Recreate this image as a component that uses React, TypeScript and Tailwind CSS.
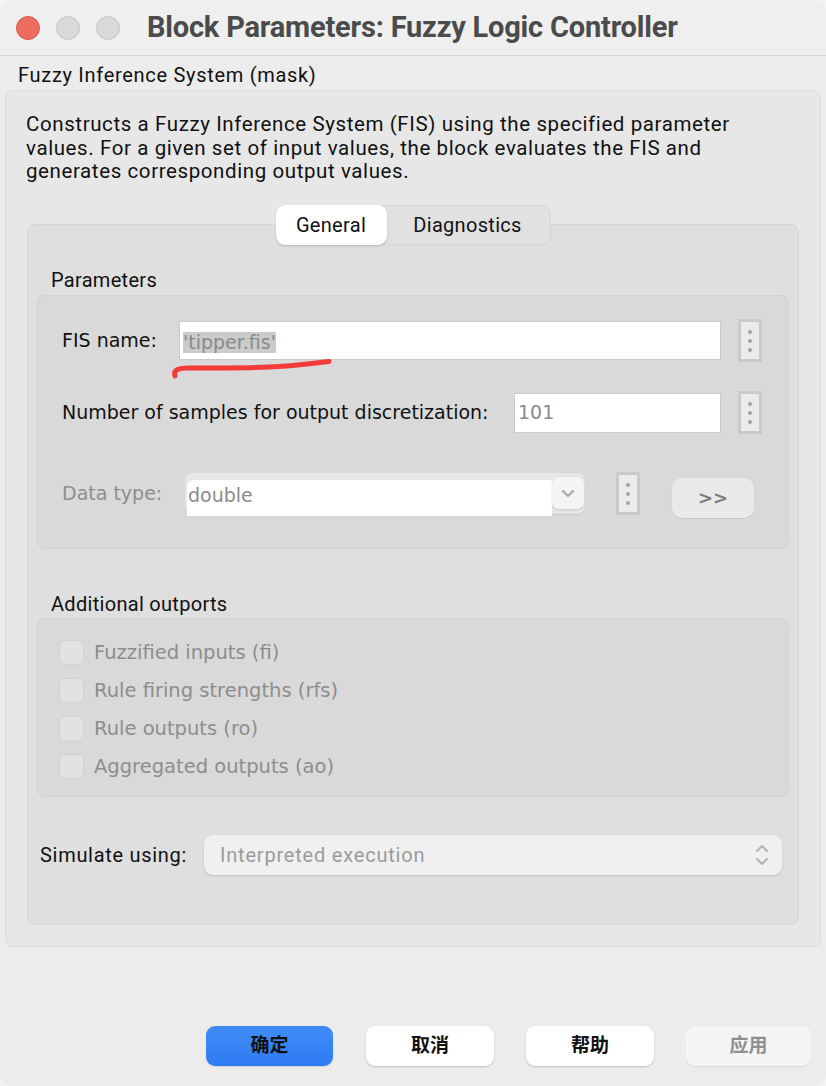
import React from "react";

const SF = "font-['Roboto','Inter',sans-serif]";
const LG = "font-['DejaVu_Sans','Verdana',sans-serif]";

function Dots() {
  return (
    <div className="w-[24px] h-[43px] border-[3px] border-[#c9c9c9] bg-[#ebebeb] flex flex-col items-center justify-center gap-[5px] shrink-0">
      <span className="w-[4px] h-[4px] rounded-full bg-[#a3a3a3]" />
      <span className="w-[4px] h-[4px] rounded-full bg-[#a3a3a3]" />
      <span className="w-[4px] h-[4px] rounded-full bg-[#a3a3a3]" />
    </div>
  );
}

function Check({ label }: { label: string }) {
  return (
    <div className="h-[38px] flex items-center">
      <span className="w-[25px] h-[25px] rounded-[6px] bg-[#e2e2e2] border border-[#d3d3d3] shrink-0" />
      <span className={`${LG} ml-[10px] text-[19.5px] text-[#8d8d8d]`}>{label}</span>
    </div>
  );
}

export default function App() {
  return (
    <div className="w-[826px] h-[1086px] bg-[#f4f4f4]">
      <div className="w-[826px] h-[1086px] bg-[#ececec] rounded-[12px] overflow-hidden flex flex-col relative">
        {/* Title bar */}
        <div className="h-[56px] shrink-0 flex items-center border-b border-[#d5d5d5] bg-[#efefef]">
          <div className="flex items-center gap-[16px] pl-[16px]">
            <span className="w-[24px] h-[24px] rounded-full bg-[#ee6b60] border border-[#d45a50]" />
            <span className="w-[24px] h-[24px] rounded-full bg-[#dadada] border border-[#c5c5c5]" />
            <span className="w-[24px] h-[24px] rounded-full bg-[#dadada] border border-[#c5c5c5]" />
          </div>
          <div className={`${SF} ml-[27px] text-[29px] font-bold text-[#4b4b4b] tracking-[-0.2px] whitespace-nowrap`}>
            Block Parameters: Fuzzy Logic Controller
          </div>
        </div>

        {/* Mask label */}
        <div className={`${SF} pl-[18px] pt-[7px] text-[20px] tracking-[0.7px] leading-[24px] text-[#111]`}>
          Fuzzy Inference System (mask)
        </div>

        {/* Outer panel */}
        <div className="mx-[5px] mt-[3px] bg-[#e7e7e7] border border-[#dcdcdc] rounded-[8px] pt-[22px] pb-[21px] px-[21px]">
          <p className={`${SF} text-[20.5px] tracking-[0.6px] leading-[23.5px] text-[#111] pr-[40px] -mx-[1px]`}>
            Constructs a Fuzzy Inference System (FIS) using the specified parameter values. For a given set of input values, the block evaluates the FIS and generates corresponding output values.
          </p>

          {/* Tabs */}
          <div className="mt-[21px] flex justify-center relative z-10">
            <div className={`${SF} flex h-[40px] bg-[#e1e1e1] border border-[#d4d4d4] rounded-[9px] text-[20px] tracking-[0.3px] text-[#111]`}>
              <div className="w-[111px] -m-[1px] h-[40px] bg-white rounded-[9px] shadow-[0_1px_2px_rgba(0,0,0,0.2)] flex items-center justify-center">
                General
              </div>
              <div className="w-[164px] flex items-center justify-center">Diagnostics</div>
            </div>
          </div>

          {/* Tab panel */}
          <div className="-mt-[21px] bg-[#dfdfdf] border border-[#d6d6d6] rounded-[8px] px-[9px] pt-[43px] pb-[49px]">
            <div className={`${SF} pl-[14px] text-[20px] tracking-[0.3px] leading-[24px] text-[#111]`}>Parameters</div>

            {/* Parameters group */}
            <div className="mt-[3px] bg-[#d9d9d9] border border-[#d2d2d2] rounded-[8px] pt-[20px] pb-[29px] pl-[24px]">
              {/* Row 1 */}
              <div className="h-[50px] flex items-center relative">
                <span className={`${LG} w-[117px] text-[19px] text-[#111]`}>FIS name:</span>
                <div className="w-[542px] h-[39px] bg-white border border-[#cacaca] flex items-center pl-[3px] pt-[3px]">
                  <span className={`${LG} text-[19px] text-[#8a8a8a] bg-[#cbcbcb] leading-[21px]`}>'tipper.fis'</span>
                </div>
                <div className="ml-[17px]">
                  <Dots />
                </div>
                <svg className="absolute left-[107px] top-[43px] pointer-events-none" width="170" height="24" viewBox="0 0 170 24">
                  <path
                    d="M6 17 C4 11 9 9 20 9 C50 9 80 9 100 8 C125 7 145 4 160 2.5"
                    fill="none"
                    stroke="#f53a3a"
                    strokeWidth="5"
                    strokeLinecap="round"
                  />
                </svg>
              </div>

              {/* Row 2 */}
              <div className="mt-[22px] h-[50px] flex items-center">
                <span className={`${LG} w-[452px] text-[19px] text-[#111] whitespace-nowrap`}>
                  Number of samples for output discretization:
                </span>
                <div className="w-[207px] h-[40px] bg-white border border-[#cacaca] flex items-center pl-[3px]">
                  <span className={`${LG} text-[19px] text-[#8a8a8a]`}>101</span>
                </div>
                <div className="ml-[17px]">
                  <Dots />
                </div>
              </div>

              {/* Row 3 */}
              <div className="mt-[31px] h-[50px] flex items-center">
                <span className={`${LG} w-[123px] text-[19px] text-[#8e8e8e]`}>Data type:</span>
                <div className="w-[400px] h-[41px] bg-[#e6e6e6] rounded-[8px] shadow-[0_1px_1px_rgba(0,0,0,0.08)] flex items-start">
                  <div className="w-[365px] h-[36px] mt-[7px] ml-[2px] bg-white rounded-tl-[6px] flex items-center pl-[1px] pb-[5px]">
                    <span className={`${LG} text-[19px] text-[#8a8a8a]`}>double</span>
                  </div>
                  <div className="w-[32px] h-[32px] mt-[4px] bg-[#f4f4f4] rounded-[7px] shadow-[0_1px_2px_rgba(0,0,0,0.15)] flex items-center justify-center">
                    <svg width="14" height="9" viewBox="0 0 14 9">
                      <path d="M2 2 L7 7 L12 2" fill="none" stroke="#a9a9a9" strokeWidth="2.2" strokeLinecap="round" strokeLinejoin="round" />
                    </svg>
                  </div>
                </div>
                <div className="ml-[31px]">
                  <Dots />
                </div>
                <div className={`${LG} ml-[32px] mt-[8px] w-[82px] h-[40px] bg-[#e9e9e9] rounded-[10px] shadow-[0_1px_1px_rgba(0,0,0,0.08)] flex items-center justify-center text-[18px] font-bold text-[#7a7a7a]`}>
                  &gt;&gt;
                </div>
              </div>
            </div>

            <div className={`${SF} mt-[43px] pl-[14px] text-[20px] tracking-[0.3px] leading-[24px] text-[#111]`}>Additional outports</div>

            {/* Outports group */}
            <div className="mt-[2px] bg-[#d9d9d9] border border-[#d2d2d2] rounded-[8px] pt-[15px] pb-[10px] pl-[21px]">
              <Check label="Fuzzified inputs (fi)" />
              <Check label="Rule firing strengths (rfs)" />
              <Check label="Rule outputs (ro)" />
              <Check label="Aggregated outputs (ao)" />
            </div>

            {/* Simulate using */}
            <div className="mt-[38px] h-[40px] flex items-center pl-[3px] pr-[7px]">
              <span className={`${SF} w-[164px] text-[20px] tracking-[0.7px] text-[#111]`}>Simulate using:</span>
              <div className="flex-1 h-[40px] bg-[#f0f0f0] rounded-[9px] shadow-[0_1px_2px_rgba(0,0,0,0.15)] flex items-center pl-[16px] pr-[12px]">
                <span className={`${SF} flex-1 text-[20px] tracking-[0.8px] text-[#9b9b9b]`}>Interpreted execution</span>
                <svg width="16" height="26" viewBox="0 0 16 26">
                  <path d="M3 9 L8 4 L13 9" fill="none" stroke="#b2b2b2" strokeWidth="2" strokeLinecap="round" strokeLinejoin="round" />
                  <path d="M3 17 L8 22 L13 17" fill="none" stroke="#b2b2b2" strokeWidth="2" strokeLinecap="round" strokeLinejoin="round" />
                </svg>
              </div>
            </div>
          </div>
        </div>

        <div className="flex-1" />

        {/* Buttons */}
        <div className={`flex pl-[206px] pb-[20px] font-['Noto_Sans_CJK_SC',sans-serif] text-[19px] font-bold leading-[24px]`}>
          <div className="w-[127px] h-[40px] rounded-[9px] bg-gradient-to-b from-[#3f8cf8] to-[#2f7cf3] text-[#111] flex items-center justify-center pb-[5px] shadow-[0_1px_1px_rgba(0,0,0,0.1)]">
            确定
          </div>
          <div className="ml-[33px] w-[128px] h-[40px] rounded-[9px] bg-white text-[#111] flex items-center justify-center pb-[5px] shadow-[0_1px_2px_rgba(0,0,0,0.2)]">
            取消
          </div>
          <div className="ml-[32px] w-[128px] h-[40px] rounded-[9px] bg-white text-[#111] flex items-center justify-center pb-[5px] shadow-[0_1px_2px_rgba(0,0,0,0.2)]">
            帮助
          </div>
          <div className="ml-[32px] w-[125px] h-[40px] rounded-[9px] bg-[#f5f5f5] text-[#8f8f8f] flex items-center justify-center pb-[5px] shadow-[0_1px_1px_rgba(0,0,0,0.08)]">
            应用
          </div>
        </div>
      </div>
    </div>
  );
}
